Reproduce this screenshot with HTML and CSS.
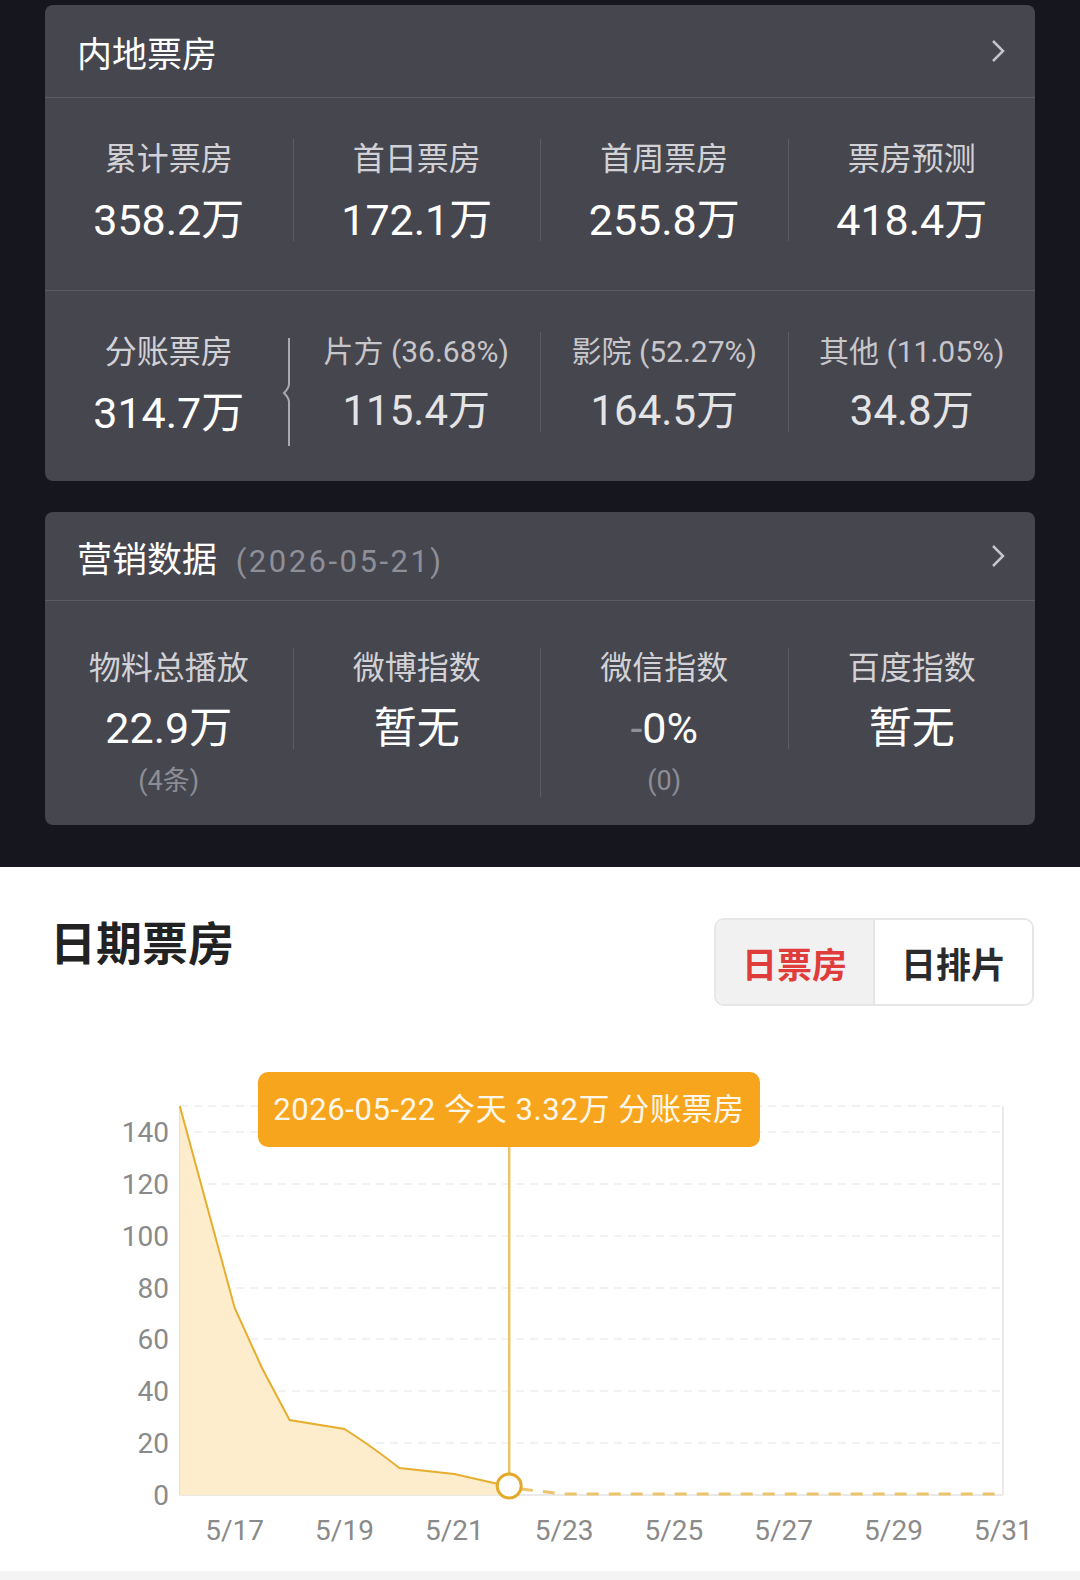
FILE: index.html
```html
<!DOCTYPE html>
<html lang="zh-CN">
<head>
    <meta charset="UTF-8">
    <meta name="viewport" content="width=device-width, initial-scale=1.0">
    <title>票房数据</title>
    <link rel="stylesheet" href="styles.css">
</head>
<body>
    <div class="dark">
        <section class="card">
            <div class="card-head">
                <span class="card-title">内地票房</span>
                <svg class="chev" width="14" height="24" viewBox="0 0 14 24"><polyline points="2,2 12,12 2,22" /></svg>
            </div>
            <div class="row row-main">
                <div class="stat"><div class="label">累计票房</div><div class="value">358.2万</div></div>
                <div class="stat"><div class="label">首日票房</div><div class="value">172.1万</div></div>
                <div class="stat"><div class="label">首周票房</div><div class="value">255.8万</div></div>
                <div class="stat"><div class="label">票房预测</div><div class="value">418.4万</div></div>
            </div>
            <div class="row row-split">
                <div class="stat"><div class="label">分账票房</div><div class="value">314.7万</div></div>
                <div class="stat brace">
                    <svg class="brace-mark" width="12" height="108" viewBox="0 0 12 108"><path d="M8 0 V46 Q8 50 3 55 Q8 60 8 64 V108" /></svg>
                    <div class="label">片方 (36.68%)</div><div class="value">115.4万</div>
                </div>
                <div class="stat"><div class="label">影院 (52.27%)</div><div class="value">164.5万</div></div>
                <div class="stat"><div class="label">其他 (11.05%)</div><div class="value">34.8万</div></div>
            </div>
        </section>

        <section class="card">
            <div class="card-head head-small">
                <span class="card-title">营销数据 <span class="date">(2026-05-21)</span></span>
                <svg class="chev" width="14" height="24" viewBox="0 0 14 24"><polyline points="2,2 12,12 2,22" /></svg>
            </div>
            <div class="row row-market">
                <div class="stat"><div class="label">物料总播放</div><div class="value">22.9万</div><div class="sub">(4条)</div></div>
                <div class="stat"><div class="label">微博指数</div><div class="value">暂无</div></div>
                <div class="stat"><div class="label">微信指数</div><div class="value"><span class="dash">-</span>0%</div><div class="sub">(0)</div></div>
                <div class="stat"><div class="label">百度指数</div><div class="value">暂无</div></div>
            </div>
        </section>
    </div>

    <div class="daily">
        <div class="daily-head">
            <h2>日期票房</h2>
            <div class="toggle">
                <span class="tab active">日票房</span>
                <span class="tab">日排片</span>
            </div>
        </div>
        <div class="chart">
            <svg width="1080" height="530" viewBox="0 0 1080 530">
                <g class="grid">
                    <line x1="180" y1="65" x2="1003" y2="65" />
                    <line x1="180" y1="91" x2="1003" y2="91" />
                    <line x1="180" y1="143" x2="1003" y2="143" />
                    <line x1="180" y1="195" x2="1003" y2="195" />
                    <line x1="180" y1="247" x2="1003" y2="247" />
                    <line x1="180" y1="298" x2="1003" y2="298" />
                    <line x1="180" y1="350" x2="1003" y2="350" />
                    <line x1="180" y1="402" x2="1003" y2="402" />
                </g>
                <line class="frame" x1="1003" y1="65" x2="1003" y2="454" />
                <line class="frame" x1="180" y1="454" x2="1003" y2="454" />
                <line class="axis" x1="180" y1="65" x2="180" y2="454" />

                <path class="area" d="M179.8 65 Q206 160 234.7 267 L262 327 L289.6 379 L344.5 388 Q370 404 399.4 427 L454.3 433 L509.2 445.4 L509.2 454 L179.8 454 Z" />
                <path class="line" d="M179.8 65 Q206 160 234.7 267 L262 327 L289.6 379 L344.5 388 Q370 404 399.4 427 L454.3 433 L509.2 445.4" />
                <path class="line future" d="M521 448 L564.1 453 L1003.3 453" />

                <line class="cursor" x1="509.2" y1="106" x2="509.2" y2="433" />
                <circle class="dot" cx="509.2" cy="445" r="12" />

                <g class="ylabels">
                    <text x="169" y="101">140</text>
                    <text x="169" y="153">120</text>
                    <text x="169" y="205">100</text>
                    <text x="169" y="257">80</text>
                    <text x="169" y="308">60</text>
                    <text x="169" y="360">40</text>
                    <text x="169" y="412">20</text>
                    <text x="169" y="464">0</text>
                </g>
                <g class="xlabels">
                    <text x="234.7" y="499">5/17</text>
                    <text x="344.5" y="499">5/19</text>
                    <text x="454.3" y="499">5/21</text>
                    <text x="564.1" y="499">5/23</text>
                    <text x="673.9" y="499">5/25</text>
                    <text x="783.7" y="499">5/27</text>
                    <text x="893.5" y="499">5/29</text>
                    <text x="1003.3" y="499">5/31</text>
                </g>
            </svg>
            <div class="tooltip">2026-05-22 今天 3.32万 分账票房</div>
        </div>
        <div class="foot"></div>
    </div>
</body>
</html>
```

FILE: styles.css
```css
body {
    margin: 0;
    font-family: Roboto, "Noto Sans CJK SC", sans-serif;
    background: #fff;
    width: 1080px;
}
.dark {
    background: #16161f;
    padding: 5px 45px 42px;
    display: flex;
    flex-direction: column;
    gap: 31px;
}
.card {
    background: #46464f;
    border-radius: 8px;
    overflow: hidden;
}
.card-head {
    height: 92px;
    padding: 0 30px 0 32px;
    display: flex;
    align-items: center;
    justify-content: space-between;
    border-bottom: 1px solid #5a5a63;
}
.card-head.head-small {
    height: 88px;
}
.card-title {
    color: #fff;
    font-size: 35px;
}
.card-title .date {
    color: #8f8f97;
    font-size: 31px;
    letter-spacing: 2.5px;
    margin-left: 10px;
}
.chev polyline {
    fill: none;
    stroke: #c4c4c8;
    stroke-width: 2.5;
}
.row {
    display: grid;
    grid-template-columns: repeat(4, 1fr);
    align-items: start;
}
.row-main {
    height: 151px;
    padding-top: 41px;
    border-bottom: 1px solid #5a5a63;
}
.row-split {
    height: 149px;
    padding-top: 41px;
}
.row-market {
    height: 177px;
    padding-top: 47px;
}
.stat {
    text-align: center;
    position: relative;
}
.stat + .stat {
    border-left: 1px solid #5c5c65;
}
.label {
    color: #d2d2d6;
    font-size: 32px;
    line-height: 40px;
}
.value {
    color: #fff;
    font-size: 43px;
    line-height: 42px;
    margin-top: 20px;
}
.row-split .stat + .stat .label {
    font-size: 30px;
    color: #c6c6cb;
}
.row-split .stat + .stat .value {
    color: #e4e4e6;
    font-size: 42px;
    margin-top: 18px;
}
.row-split .brace {
    border-left: none;
}
.brace-mark {
    position: absolute;
    left: -12px;
    top: 6px;
}
.brace-mark path {
    fill: none;
    stroke: #a9a9ae;
    stroke-width: 2;
}
.row-market .value {
    margin-top: 19px;
}
.dash {
    color: #8f8f97;
}
.sub {
    color: #8d8d95;
    font-size: 27px;
    line-height: 32px;
    margin-top: 16px;
}
.daily-head {
    display: flex;
    justify-content: space-between;
    align-items: flex-start;
    padding: 51px 46px 0 50px;
}
.daily-head h2 {
    margin: 0;
    margin-top: -2px;
    font-size: 46px;
    line-height: 56px;
    font-weight: 700;
    color: #222;
}
.toggle {
    display: flex;
    height: 84px;
    border: 2px solid #e6e6e6;
    border-radius: 10px;
    overflow: hidden;
}
.tab {
    width: 157px;
    display: flex;
    align-items: center;
    justify-content: center;
    font-size: 35px;
    font-weight: 700;
    color: #2b2b2b;
    background: #fff;
}
.tab.active {
    color: #e03c3c;
    background: #f1f1f1;
    border-right: 2px solid #e6e6e6;
}
.chart {
    position: relative;
    height: 530px;
    margin-top: 35px;
}
.chart svg {
    display: block;
}
.grid line {
    stroke: #eeeeee;
    stroke-width: 1.5;
    stroke-dasharray: 8 6;
}
.frame {
    stroke: #eaeaea;
    stroke-width: 2;
}
.axis {
    stroke: #f3dcae;
    stroke-width: 2;
}
.area {
    fill: #fdedcc;
}
.line {
    fill: none;
    stroke: #e6ae2e;
    stroke-width: 2;
}
.line.future {
    stroke: #ecc46a;
    stroke-width: 3;
    stroke-dasharray: 12 10;
}
.cursor {
    stroke: #e9c56a;
    stroke-width: 2.5;
}
.dot {
    fill: #fff;
    stroke: #e4a92a;
    stroke-width: 3;
}
.ylabels text {
    text-anchor: end;
    font-size: 28px;
    fill: #8a8a8a;
}
.xlabels text {
    text-anchor: middle;
    font-size: 28px;
    fill: #8a8a8a;
}
.tooltip {
    position: absolute;
    left: 258px;
    top: 31px;
    width: 502px;
    height: 75px;
    line-height: 75px;
    background: #f8a51e;
    border-radius: 10px;
    color: #fff8ea;
    font-size: 31px;
    letter-spacing: 0.6px;
    text-align: center;
}
.foot {
    height: 10px;
    background: #f4f4f4;
}
```
